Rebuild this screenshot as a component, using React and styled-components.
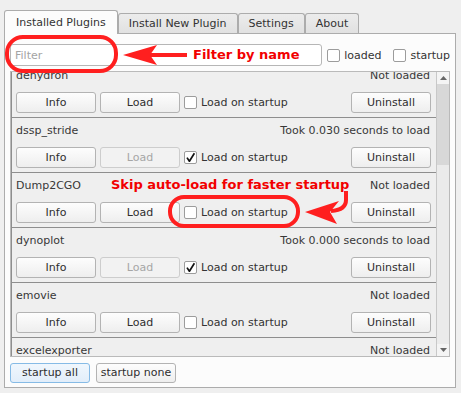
import React from "react";
import styled, { createGlobalStyle } from "styled-components";

const plugins = [
  { name: "dehydron", status: "Not loaded", loaded: false, startup: false },
  { name: "dssp_stride", status: "Took 0.030 seconds to load", loaded: true, startup: true },
  { name: "Dump2CGO", status: "Not loaded", loaded: false, startup: false },
  { name: "dynoplot", status: "Took 0.000 seconds to load", loaded: true, startup: true },
  { name: "emovie", status: "Not loaded", loaded: false, startup: false },
  { name: "excelexporter", status: "Not loaded", loaded: false, startup: false },
  { name: "findseq", status: "Not loaded", loaded: false, startup: false },
];

const tabs = ["Installed Plugins", "Install New Plugin", "Settings", "About"];

const Check = ({ checked }) => (
  <CheckBox>
    {checked && (
      <svg width="11" height="11" viewBox="0 0 11 11">
        <path d="M2 5.6 L4.4 9.2 L9.4 1.2" fill="none" stroke="#111" strokeWidth="1.7" strokeLinejoin="round" />
      </svg>
    )}
  </CheckBox>
);

const PluginRow = ({ plugin }) => (
  <Row>
    <RowHead>
      <span>{plugin.name}</span>
      <span>{plugin.status}</span>
    </RowHead>
    <Controls>
      <Button>Info</Button>
      <Button disabled={plugin.loaded}>Load</Button>
      <CheckLabel>
        <Check checked={plugin.startup} />
        Load on startup
      </CheckLabel>
      <Spacer />
      <Button>Uninstall</Button>
    </Controls>
  </Row>
);

const App = () => {
  return (
    <Window>
      <GlobalStyle />
      <TabBar>
        {tabs.map((t, i) => (
          <Tab key={t} $active={i === 0}>
            {t}
          </Tab>
        ))}
      </TabBar>
      <Panel>
        <FilterRow>
          <FilterInput placeholder="Filter" readOnly />
          <CheckLabel $ml={5}>
            <Check />
            loaded
          </CheckLabel>
          <CheckLabel $ml={12}>
            <Check />
            startup
          </CheckLabel>
        </FilterRow>
        <ListBox>
          <Viewport>
            <ListInner>
              {plugins.map((p) => (
                <PluginRow key={p.name} plugin={p} />
              ))}
            </ListInner>
          </Viewport>
          <ScrollBar>
            <ArrowBox>
              <svg width="7" height="4" viewBox="0 0 7 4">
                <path d="M0 4 L3.5 0 L7 4 Z" fill="#666" />
              </svg>
            </ArrowBox>
            <Thumb />
            <Track />
            <ArrowBox>
              <svg width="7" height="4" viewBox="0 0 7 4">
                <path d="M0 0 L3.5 4 L7 0 Z" fill="#666" />
              </svg>
            </ArrowBox>
          </ScrollBar>
        </ListBox>
        <BottomBar>
          <BottomButton $focus>startup all</BottomButton>
          <BottomButton>startup none</BottomButton>
        </BottomBar>
      </Panel>

      {/* red annotations drawn over the dialog */}
      <Overlay width="461" height="393" viewBox="0 0 461 393">
        <rect x="7" y="37" width="109" height="34" rx="16" fill="none" stroke="#ff1f1f" strokeWidth="4" />
        <rect x="149" y="53" width="38" height="4" fill="#ff1f1f" />
        <path d="M123 55 L157 45 L150 55 L157 65 Z" fill="#ff1f1f" />
        <rect x="170" y="197" width="128" height="29" rx="14" fill="none" stroke="#ff1f1f" strokeWidth="4" />
        <path d="M346 191 L346 200 Q346 210 331 211" fill="none" stroke="#ff1f1f" strokeWidth="4" />
        <path d="M305 212 L339 201 L330 212 L337 224 Z" fill="#ff1f1f" />
      </Overlay>
      <Note $x={193} $y={48}>Filter by name</Note>
      <Note $x={111} $y={178}>Skip auto-load for faster startup</Note>
    </Window>
  );
};

//Styled Components
const GlobalStyle = createGlobalStyle`
  html, body {
    margin: 0;
    padding: 0;
    background: #efefef;
  }
  body {
    font-family: "DejaVu Sans", "Liberation Sans", sans-serif;
    font-size: 11px;
    color: #333;
  }
`;

const Window = styled.div`
  position: relative;
  box-sizing: border-box;
  width: 461px;
  height: 393px;
  padding: 10px 5px 0 4px;
  overflow: hidden;
`;

const TabBar = styled.div`
  display: flex;
  align-items: flex-end;
  height: 23px;
`;

const Tab = styled.div`
  position: relative;
  z-index: ${(p) => (p.$active ? 2 : 1)};
  box-sizing: border-box;
  display: flex;
  align-items: center;
  height: ${(p) => (p.$active ? 24 : 20)}px;
  margin-bottom: ${(p) => (p.$active ? -1 : 0)}px;
  padding: 0 ${(p) => (p.$active ? 11 : 10)}px;
  border: 1px solid #acacac;
  border-bottom: none;
  border-radius: 3px 3px 0 0;
  background: ${(p) => (p.$active ? "#fcfcfc" : "linear-gradient(#ececec, #e1e1e1)")};
  color: #333;
  white-space: nowrap;
`;

const Panel = styled.div`
  box-sizing: border-box;
  display: flex;
  flex-direction: column;
  height: 355px;
  padding: 10px 5px 4px 5px;
  border: 1px solid #acacac;
  background: #fcfcfc;
`;

const FilterRow = styled.div`
  display: flex;
  align-items: center;
  height: 22px;
`;

const FilterInput = styled.input`
  flex: 1;
  box-sizing: border-box;
  height: 22px;
  padding: 0 4px;
  border: 1px solid #b6b6b6;
  border-radius: 3px;
  background: #fff;
  font-family: "DejaVu Sans", "Liberation Sans", sans-serif;
  font-size: 11px;
  outline: none;
  &::placeholder {
    color: #a4a4a4;
  }
`;

const CheckLabel = styled.label`
  display: flex;
  align-items: center;
  gap: 4px;
  margin-left: ${(p) => p.$ml || 0}px;
  white-space: nowrap;
  color: #333;
`;

const CheckBox = styled.span`
  box-sizing: border-box;
  display: flex;
  align-items: center;
  justify-content: center;
  width: 13px;
  height: 13px;
  border: 1px solid #9c9c9c;
  border-radius: 2px;
  background: #fff;
`;

const ListBox = styled.div`
  box-sizing: border-box;
  display: flex;
  height: 286px;
  margin-top: 5px;
  border: 1px solid #bababa;
  background: #efefef;
`;

const Viewport = styled.div`
  flex: 1;
  overflow: hidden;
`;

const ListInner = styled.div`
  margin-top: -9px;
`;

const Row = styled.div`
  box-sizing: border-box;
  height: 55px;
  padding: 5px 5px 4px 4px;
  border-left: 1px solid #8e8e8e;
  border-bottom: 1px solid #8e8e8e;
`;

const RowHead = styled.div`
  display: flex;
  justify-content: space-between;
  height: 16px;
  line-height: 16px;
  padding-right: 1px;
  color: #383838;
  white-space: nowrap;
`;

const Controls = styled.div`
  display: flex;
  align-items: center;
  gap: 4px;
  margin-top: 8px;
  height: 21px;
`;

const Spacer = styled.div`
  flex: 1;
`;

const Button = styled.button`
  box-sizing: border-box;
  width: 80px;
  height: 21px;
  padding: 0;
  line-height: 14px;
  border: 1px solid ${(p) => (p.disabled ? "#cdcdcd" : "#b3b3b3")};
  border-radius: 3px;
  background: ${(p) => (p.disabled ? "#f2f2f2" : "linear-gradient(#fdfdfd, #eeeeee)")};
  color: ${(p) => (p.disabled ? "#a6a6a6" : "#2e2e2e")};
  font-family: "DejaVu Sans", "Liberation Sans", sans-serif;
  font-size: 11px;
  white-space: nowrap;
`;

const BottomBar = styled.div`
  display: flex;
  gap: 6px;
  margin-top: 6px;
`;

const BottomButton = styled(Button)`
  height: 20px;
  border-color: ${(p) => (p.$focus ? "#86bbe6" : "#b3b3b3")};
  background: ${(p) => (p.$focus ? "linear-gradient(#f0f7fd, #e2eefa)" : "linear-gradient(#fdfdfd, #eeeeee)")};
`;

const ScrollBar = styled.div`
  box-sizing: border-box;
  display: flex;
  flex-direction: column;
  width: 13px;
  border-left: 1px solid #c8c8c8;
  background: #ebebeb;
`;

const ArrowBox = styled.div`
  display: flex;
  align-items: center;
  justify-content: center;
  height: 12px;
  background: #f4f4f4;
`;

const Thumb = styled.div`
  height: 81px;
  background: #d8d8d8;
`;

const Track = styled.div`
  flex: 1;
  background: #ebebeb;
`;

const Overlay = styled.svg`
  position: absolute;
  left: 0;
  top: 0;
  z-index: 5;
  pointer-events: none;
`;

const Note = styled.span`
  position: absolute;
  z-index: 6;
  left: ${(p) => p.$x}px;
  top: ${(p) => p.$y}px;
  font-family: "DejaVu Sans", "Liberation Sans", sans-serif;
  font-size: 13px;
  font-weight: bold;
  line-height: 13px;
  color: #f20000;
  white-space: nowrap;
`;

export default App;
